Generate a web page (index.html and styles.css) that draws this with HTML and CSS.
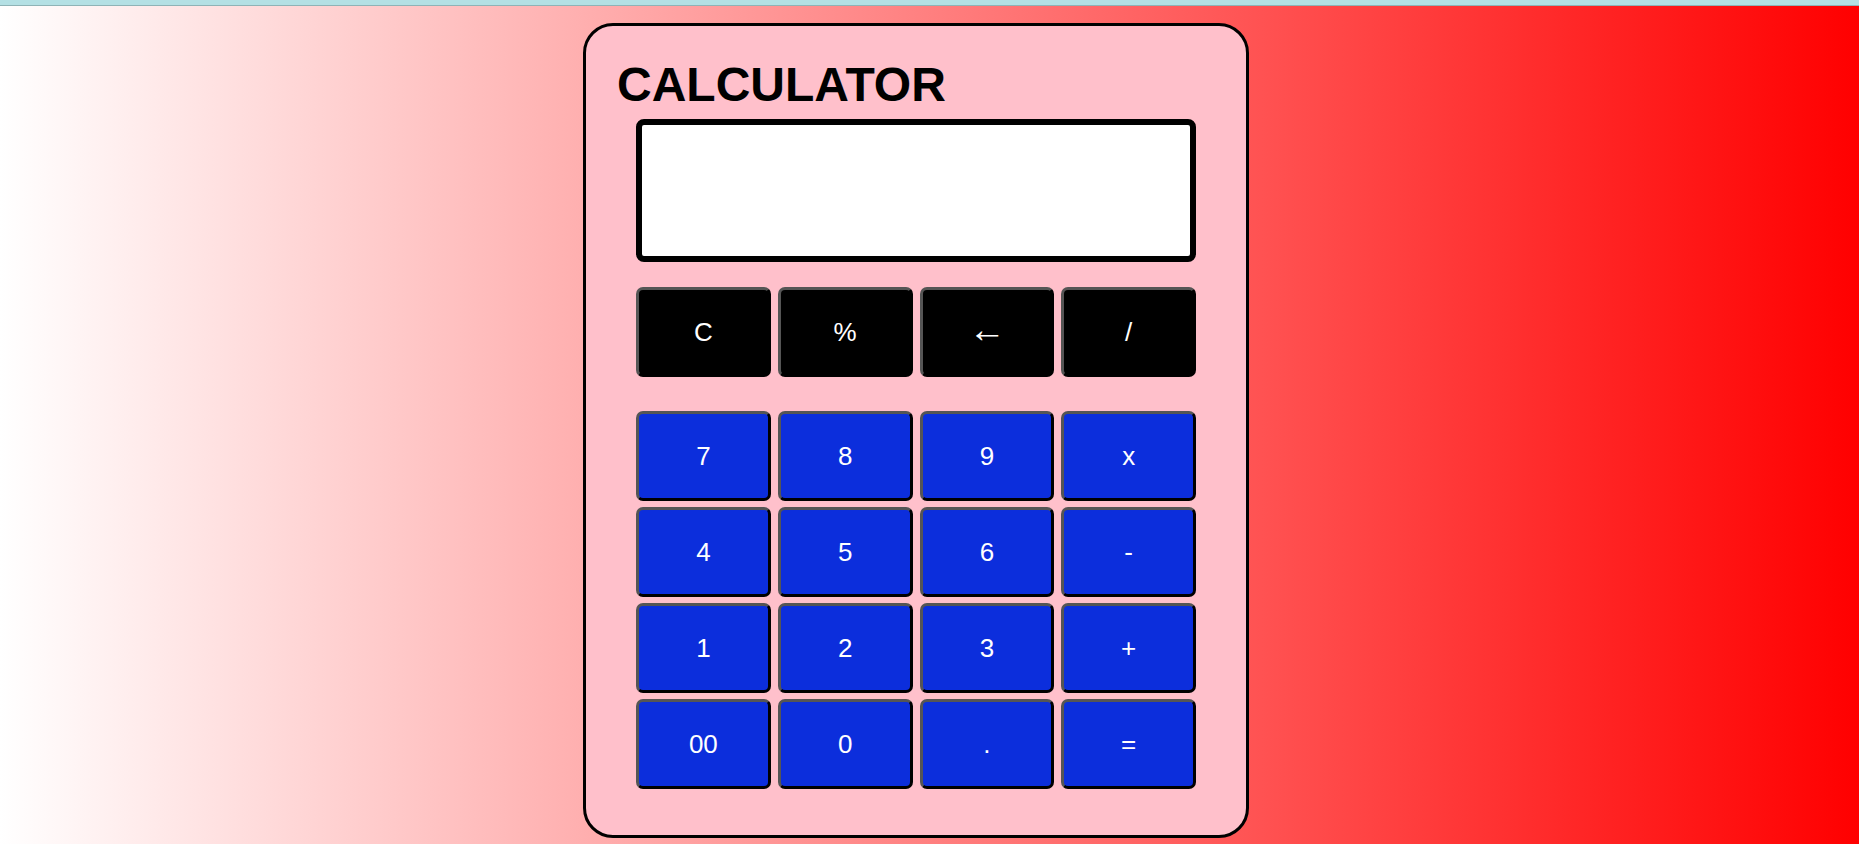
FILE: index.html
```html
<!DOCTYPE html>
<html lang="en">
<head>
<meta charset="utf-8">
<title>Calculator</title>
<link rel="stylesheet" href="styles.css">
</head>
<body>
<div class="topbar"></div>
<main class="page">
  <div class="calc">
    <h1 class="title">CALCULATOR</h1>
    <div class="body">
      <div class="display"></div>
      <div class="keys keys-top">
        <button class="key key-dark">C</button>
        <button class="key key-dark">%</button>
        <button class="key key-dark"><span class="arrow">&larr;</span></button>
        <button class="key key-dark">/</button>
      </div>
      <div class="keys keys-main">
        <button class="key">7</button>
        <button class="key">8</button>
        <button class="key">9</button>
        <button class="key">x</button>
        <button class="key">4</button>
        <button class="key">5</button>
        <button class="key">6</button>
        <button class="key">-</button>
        <button class="key">1</button>
        <button class="key">2</button>
        <button class="key">3</button>
        <button class="key">+</button>
        <button class="key">00</button>
        <button class="key">0</button>
        <button class="key">.</button>
        <button class="key">=</button>
      </div>
    </div>
  </div>
</main>
</body>
</html>
```

FILE: styles.css
```css
html, body {
  margin: 0;
  padding: 0;
  height: 100%;
}

body {
  font-family: "Liberation Sans", Arial, sans-serif;
  display: flex;
  flex-direction: column;
  overflow: hidden;
}

.topbar {
  height: 5px;
  background: #b4e0e4;
  border-bottom: 1px solid #8fb3b6;
  flex: none;
}

.page {
  flex: 1;
  background: linear-gradient(to right, #ffffff, #ff0000);
  padding-top: 17px;
  padding-left: 583px;
}

.calc {
  box-sizing: border-box;
  width: 666px;
  border: 3px solid #000;
  border-radius: 30px;
  background: #ffc0cb;
  padding: 30px 50px 46px 31px;
}

.title {
  margin: 0;
  font-size: 48px;
  line-height: 57px;
  font-weight: bold;
  color: #000;
}

.body {
  padding-left: 19px;
}

.display {
  margin-top: 6px;
  height: 143px;
  box-sizing: border-box;
  border: 6px solid #000;
  border-radius: 8px;
  background: #fff;
}

.keys {
  display: grid;
  grid-template-columns: repeat(4, 1fr);
  grid-auto-rows: 90px;
  column-gap: 7px;
  row-gap: 6px;
}

.keys-top {
  margin-top: 25px;
}

.keys-main {
  margin-top: 34px;
}

.key {
  box-sizing: border-box;
  margin: 0;
  padding: 0;
  display: flex;
  align-items: center;
  justify-content: center;
  font-family: "Liberation Sans", Arial, sans-serif;
  font-size: 26px;
  color: #fff;
  background: #0c2edc;
  border: 3px solid;
  border-color: #555 #000 #000 #555;
  border-radius: 7px;
}

.key-dark {
  background: #000;
}

.arrow {
  font-family: "Liberation Sans", Arial, sans-serif;
  font-size: 37px;
  line-height: 1;
  position: relative;
  top: -3px;
}
```
